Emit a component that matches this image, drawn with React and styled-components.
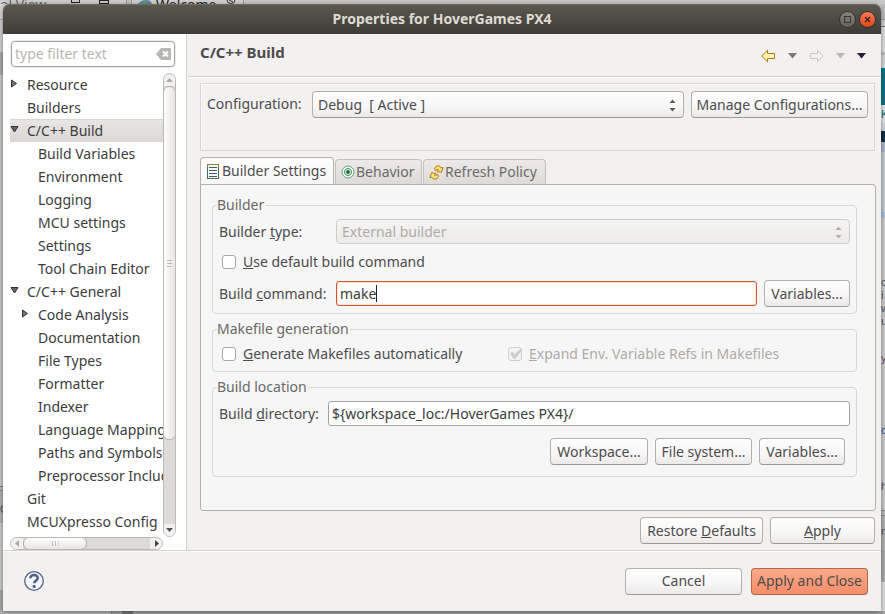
import React, { useState } from "react";
import styled, { createGlobalStyle, css } from "styled-components";

const GlobalStyle = createGlobalStyle`
  * { box-sizing: border-box; }
  body { margin: 0; background: #c9c9c9; }
  body, button, input, select {
    font-family: "Noto Sans", "Open Sans", sans-serif;
    font-size: 14px;
    line-height: 20px;
    color: #4c4c4c;
  }
`;

/* ---------- workspace behind the dialog ---------- */

const Screen = styled.div`
  display: grid;
  min-height: 100vh;
  overflow: hidden;
  & > * { grid-area: 1 / 1; }
`;

const Workspace = styled.div`
  display: grid;
  grid-template-rows: 4px 1fr 3px;
  background: #c9c9c9;
`;

const TopStrip = styled.div`
  display: flex;
  align-items: flex-start;
  overflow: hidden;
  height: 4px;
  background: linear-gradient(90deg, #cdcdcd 0 126px, #999 126px 127px, #c4c4c4 127px 131px, #999 131px 132px, #d0d0d0 132px 243px, #999 243px 244px, #c8c8c8 244px);
`;

const StripText = styled.span`
  flex: none;
  width: ${(p) => p.$width}px;
  line-height: 9px;
  color: ${(p) => p.$color};
  white-space: nowrap;
`;

const StripIcon = styled.svg`
  flex: none;
  width: ${(p) => p.$width}px;
  height: 4px;
`;

const Sides = styled.div`
  display: flex;
  justify-content: space-between;
`;

const Side = styled.div`
  display: flex;
  flex-direction: column;
  width: 4px;
  overflow: hidden;
  background: ${(p) => p.$background};
`;

const SideText = styled.span`
  display: flex;
  flex: none;
  align-items: flex-end;
  height: ${(p) => p.$height}px;
  font-family: "Liberation Sans", sans-serif;
  font-size: 11px;
  line-height: 13px;
  color: ${(p) => p.$color || "#555563"};
`;

const BottomStrip = styled.div`
  background: linear-gradient(90deg, #b5b5b5 0 111px, #888 111px 112px, #a2a2a2 112px 122px, #777 122px 133px, #a2a2a2 133px);
`;

/* ---------- dialog frame ---------- */

const Dialog = styled.main`
  display: flex;
  flex-direction: column;
  margin: 4px 4px 3px 3px;
  border-radius: 7px 7px 0 0;
  background: #f2f1f0;
  box-shadow: 0 1px 5px rgba(0, 0, 0, 0.45);
  min-width: 0;
`;

const TitleBar = styled.header`
  display: grid;
  grid-template-columns: 1fr auto 1fr;
  align-items: center;
  height: 30px;
  padding: 0 5px;
  border-radius: 7px 7px 0 0;
  background: linear-gradient(#5b594f, #3d3c37);
  box-shadow: inset 0 1px #6d6a60;
`;

const WindowTitle = styled.h1`
  grid-column: 2;
  margin: 0;
  font-size: 14px;
  line-height: 20px;
  font-weight: 700;
  color: #dfdbd2;
`;

const WindowButtons = styled.div`
  display: flex;
  justify-content: flex-end;
  gap: 3px;
`;

const WindowButton = styled.button`
  display: flex;
  width: 17px;
  height: 17px;
  padding: 0;
  border: 1px solid #31302c;
  border-radius: 50%;
  background: ${(p) => (p.$close ? "linear-gradient(#f47a55, #e0481a)" : "linear-gradient(#85837b, #65635b)")};
`;

const Body = styled.div`
  display: flex;
  flex: 1;
  border-bottom: 1px solid #d5d3d0;
`;

/* ---------- sidebar ---------- */

const Sidebar = styled.nav`
  display: flex;
  flex: none;
  flex-direction: column;
  width: 184px;
  padding: 7px 10px 0 7px;
  border-right: 1px solid #d5d3d0;
  background: #fff;
`;

const Filter = styled.div`
  display: flex;
  align-items: center;
  height: 26px;
  margin: 0 1px;
  padding: 0 3px;
  border: 1px solid #a6a39c;
  border-radius: 4px;
  background: #fff;
  box-shadow: 0 0 0 1px #eeedec;
`;

const FilterInput = styled.input`
  flex: 1;
  min-width: 0;
  padding: 0;
  border: 0;
  outline: 0;
  background: none;
  &::placeholder { color: #b9b6b0; opacity: 1; }
`;

const PlainButton = styled.button`
  display: flex;
  flex: none;
  padding: 0;
  border: 0;
  background: none;
`;

const TreeArea = styled.div`
  display: grid;
  flex: 1;
  grid-template-columns: minmax(0, 1fr) 13px;
  grid-template-rows: 464px 13px;
  margin-top: 6px;
`;

const Tree = styled.ul`
  margin: 0;
  padding: 0;
  overflow: hidden;
  list-style: none;
`;

const TreeRow = styled.button`
  display: flex;
  align-items: center;
  width: 100%;
  height: 23px;
  padding: 0 0 0 ${(p) => p.$depth * 11}px;
  border: 0;
  background: ${(p) => (p.$selected ? "linear-gradient(#e9e7e6, #d9d6d3)" : "none")};
  box-shadow: ${(p) => (p.$selected ? "inset 0 1px #d8d5d2" : "none")};
  color: #3c3c3c;
  white-space: nowrap;
`;

const Twisty = styled.svg`
  flex: none;
  width: 9px;
  height: 9px;
  margin: 0 8px 2px 0;
`;

const ScrollTrack = styled.div`
  display: flex;
  flex-direction: ${(p) => (p.$vertical ? "column" : "row")};
  border: 1px solid #bdbab5;
  border-radius: 7px;
  background: #dddbd8;
  overflow: hidden;
`;

const ScrollArrow = styled.button`
  display: flex;
  flex: none;
  align-items: center;
  justify-content: center;
  width: ${(p) => (p.$vertical ? 11 : 12)}px;
  height: ${(p) => (p.$vertical ? 12 : 11)}px;
  padding: 0;
  border: 0;
  background: #f2f1f0;
`;

const ScrollThumb = styled.div`
  display: flex;
  flex: none;
  align-items: center;
  justify-content: center;
  border: 1px solid #b2afa9;
  border-radius: 6px;
  ${(p) =>
    p.$vertical
      ? css`height: 354px; margin: 0 -1px; background: linear-gradient(90deg, #fdfdfd, #e7e5e3);`
      : css`width: 64px; margin: -1px 0; background: linear-gradient(#fdfdfd, #e7e5e3);`}
`;

const Grip = styled.span`
  width: 7px;
  height: 7px;
  transform: ${(p) => (p.$vertical ? "rotate(90deg)" : "none")};
  background: repeating-linear-gradient(90deg, #bbb 0 1px, transparent 1px 3px);
  clip-path: inset(1px 0);
`;

const ScrollSpace = styled.div`
  flex: 1;
`;

/* ---------- content ---------- */

const Content = styled.section`
  display: flex;
  flex: 1;
  flex-direction: column;
  min-width: 0;
  margin-left: 1px;
`;

const PageHeader = styled.div`
  display: flex;
  align-items: center;
  justify-content: space-between;
  height: 43px;
  padding: 0 15px 6px 12px;
  border-bottom: 1px solid #d5d3d0;
  box-shadow: 0 1px #fbfbfb;
`;

const PageTitle = styled.h2`
  margin: 0;
  font-size: 15px;
  line-height: 20px;
  font-weight: 700;
`;

const HistoryTools = styled.div`
  display: flex;
  align-items: center;
  gap: 12px;
  padding-top: 8px;
`;

const HistoryPair = styled.div`
  display: flex;
  align-items: center;
  gap: 12px;
`;

const PageBody = styled.div`
  display: flex;
  flex: 1;
  flex-direction: column;
  padding: 6px 6px 6px 12px;
`;

const ConfigurationBar = styled.div`
  display: flex;
  gap: 7px;
  height: 68px;
  padding: 7px 6px;
  border: 1px solid #d8d6d3;
  box-shadow: inset 1px 1px #fbfbfb;
`;

const FieldLabel = styled.label`
  flex: none;
  width: ${(p) => p.$width}px;
  white-space: nowrap;
`;

const ConfigLabel = styled(FieldLabel)`
  padding-top: 3px;
`;

const Button = styled.button`
  flex: none;
  min-width: ${(p) => p.$width || 86}px;
  height: 27px;
  padding: 0 4px;
  border: 1px solid ${(p) => (p.$primary ? "#b5694c" : "#b4b1ac")};
  border-bottom-color: ${(p) => (p.$primary ? "#a86148" : "#9d9a95")};
  border-radius: 4px;
  background: ${(p) =>
    p.$primary ? "linear-gradient(#fcaa8b, #f58d69)" : "linear-gradient(#fefefe, #f7f6f6 60%, #ebeae8)"};
  white-space: nowrap;
`;

const SelectBox = styled.div`
  display: grid;
  flex: 1;
  min-width: 0;
  height: ${(p) => (p.$low ? 25 : 27)}px;
  & > * { grid-area: 1 / 1; }
`;

const Select = styled.select`
  width: 100%;
  padding: 0 20px 0 5px;
  appearance: none;
  border: 1px solid #b4b1ac;
  border-bottom-color: #9d9a95;
  border-radius: 4px;
  background: linear-gradient(#fefefe, #f7f6f6 60%, #ebeae8);
  &:disabled {
    border-color: #cfccc8;
    background: linear-gradient(#f5f4f4, #ecebe9);
    color: #aeaba6;
    opacity: 1;
  }
`;

const SelectArrows = styled.svg`
  width: 7px;
  height: 13px;
  align-self: center;
  justify-self: end;
  margin: 1px 8px 0 0;
  pointer-events: none;
`;

const TabList = styled.div`
  display: flex;
  align-items: flex-end;
  gap: 1px;
  height: 28px;
  margin: 6px 0 -1px;
`;

const Tab = styled.button`
  display: flex;
  align-items: center;
  gap: ${(p) => (p.$active ? 3 : 1)}px;
  width: ${(p) => p.$width}px;
  height: ${(p) => (p.$active ? 28 : 26)}px;
  padding: 0 0 0 ${(p) => (p.$active ? 6 : 5)}px;
  border: 1px solid ${(p) => (p.$active ? "#b4b1ac" : "#c4c1bc")};
  border-bottom-color: ${(p) => (p.$active ? "#f6f6f6" : "#b4b1ac")};
  border-radius: 4px 4px 0 0;
  background: ${(p) => (p.$active ? "linear-gradient(#fefefe, #f6f6f6)" : "linear-gradient(#eceae9, #dddad7)")};
  color: ${(p) => (p.$active ? "#4c4c4c" : "#6c6b69")};
  white-space: nowrap;
  & > svg { flex: none; }
`;

const TabPanel = styled.div`
  display: flex;
  flex: 1;
  flex-direction: column;
  gap: 5px;
  margin-right: -1px;
  padding: 10px 18px 33px 11px;
  border: 1px solid #b4b1ac;
  border-radius: 0 3px 3px 3px;
  background: #f6f6f6;
`;

const Group = styled.fieldset`
  min-width: 0;
  margin: 0;
  padding: 4px 6px 6px;
  border: 1px solid #d9d7d5;
  border-radius: 4px;
`;

const Legend = styled.legend`
  height: 20px;
  margin-left: -2px;
  padding: 0 1px 0 0;
  color: #6a6967;
`;

const GroupRows = styled.div`
  display: flex;
  flex-direction: column;
  gap: 7px;
`;

const FieldRow = styled.div`
  display: flex;
  align-items: center;
`;

const CheckRow = styled.div`
  display: flex;
  height: 22px;
`;

const CheckLabel = styled.label`
  display: flex;
  align-items: center;
  gap: 7px;
  width: ${(p) => (p.$first ? "286px" : "auto")};
  padding-left: 3px;
  color: ${(p) => (p.$disabled ? "#aeaba6" : "#4c4c4c")};
  white-space: nowrap;
`;

const CheckInput = styled.input`
  display: grid;
  flex: none;
  width: 14px;
  height: 14px;
  margin: 0;
  appearance: none;
  border: 1px solid #aaa7a2;
  border-radius: 3px;
  background: #fff;
  &:disabled { border-color: #d0cecb; background: #f5f4f4; }
  &:checked::before {
    content: "";
    width: 12px;
    height: 10px;
    margin: 1px 0 0 1px;
    background: #cfcdca;
    clip-path: polygon(0 45%, 20% 25%, 40% 50%, 85% 0, 100% 12%, 45% 100%, 30% 100%);
  }
`;

const TextField = styled.input`
  flex: 1;
  min-width: 0;
  height: 25px;
  padding: 0 3px;
  border: 1px solid #a6a39c;
  border-radius: 3px;
  outline: 0;
  background: #fff;
  color: #3c3c3c;
`;

const FocusedField = styled.div`
  display: flex;
  flex: 1;
  align-items: center;
  height: 25px;
  margin-right: 7px;
  padding: 0 3px;
  border: 1px solid #d2572e;
  border-radius: 3px;
  background: #fff;
  box-shadow: inset 0 0 0 1px #fbe3da;
`;

const GrowingInput = styled.input`
  field-sizing: content;
  min-width: 1px;
  padding: 0;
  border: 0;
  outline: 0;
  background: none;
  color: #3c3c3c;
  caret-color: transparent;
`;

const Caret = styled.span`
  width: 1px;
  height: 17px;
  background: #222;
`;

const ButtonRow = styled.div`
  display: flex;
  justify-content: flex-end;
  gap: 7px;
  padding: ${(p) => (p.$inset ? "5px" : "6px 0 0")};
`;

const Footer = styled.footer`
  display: flex;
  align-items: center;
  gap: 9px;
  height: 60px;
  padding: 0 13px 0 20px;
  box-shadow: inset 0 1px #fbfbfb;
`;

const HelpButton = styled(PlainButton)`
  margin-right: auto;
`;

/* ---------- drawings ---------- */

const Triangle = ({ dir, color = "#8b8986" }) => {
  const points = { up: "0,5 7,5 3.5,1", down: "0,1 7,1 3.5,5", left: "5,0 5,7 1,3.5", right: "2,0 2,7 6,3.5" };
  return (
    <svg width="7" height="7" aria-hidden="true">
      <polygon points={points[dir]} fill={color} />
    </svg>
  );
};

const Arrows = ({ faded }) => (
  <SelectArrows viewBox="0 0 7 13" aria-hidden="true">
    <path d="M3.500 .5 6.500 4H.5zM.5 9h6l-3 3.500z" fill={faded ? "#b3b0ac" : "#5c5b59"} />
  </SelectArrows>
);

const HistoryArrow = ({ forward }) => (
  <svg width="15" height="14" viewBox="0 0 15 14" aria-hidden="true">
    <g transform={forward ? "translate(15 0) scale(-1 1)" : undefined}>
      <path
        d="M.8 7 6.500 1.200V4.500H13.500V9.500H6.500V12.800z"
        fill={forward ? "#f3f2f1" : "#fff2b4"}
        stroke={forward ? "#cbc9c6" : "#b17a12"}
        strokeLinejoin="round"
      />
    </g>
  </svg>
);

const MenuArrow = ({ color }) => (
  <svg width="9" height="6" viewBox="0 0 9 6" aria-hidden="true">
    <path d="M0 0h9L4.500 5.500z" fill={color} />
  </svg>
);

const SettingsIcon = () => (
  <svg width="12" height="15" viewBox="0 0 12 15" aria-hidden="true">
    <rect x=".5" y=".5" width="11" height="14" fill="#f4faf7" stroke="#9a7b2c" />
    <path d="M.5 3v11.500h11V3" fill="none" stroke="#49695f" />
    <path d="M2 3.500h8M2 6.500h8M2 9.500h8M2 12.500h8" stroke="#3f5a58" />
  </svg>
);

const TargetIcon = () => (
  <svg width="14" height="14" viewBox="0 0 14 14" aria-hidden="true">
    <circle cx="7" cy="7" r="6" fill="#fff" stroke="#55a57c" />
    <circle cx="7" cy="7" r="3.500" fill="#e8f7ea" stroke="#2f8a5a" />
    <circle cx="7" cy="7" r="1.900" fill="#276b2c" />
  </svg>
);

const RefreshIcon = () => (
  <svg width="15" height="15" viewBox="0 0 15 15" aria-hidden="true">
    <g fill="#ffdf78" stroke="#b27a17" strokeLinejoin="round">
      <path d="M5.500 3.500 7.500 1 10.500 1 12 2.700 14 2.500 12.500 7.300 8 6.500 9.500 5 8.500 4 6.500 6z" />
      <path d="M9.500 11.500 7.500 14 4.500 14 3 12.300 1 12.500 2.500 7.700 7 8.500 5.500 10 6.500 11 8.500 9z" />
    </g>
  </svg>
);

const ClearIcon = () => (
  <svg width="15" height="12" viewBox="0 0 15 12" aria-hidden="true">
    <path d="M5 0h9q1 0 1 1v10q0 1-1 1H5L0 6z" fill="#b9b7b3" />
    <path d="m7 3.500 5 5m0-5-5 5" stroke="#fff" strokeWidth="2" />
  </svg>
);

const HelpIcon = () => (
  <svg width="22" height="22" viewBox="0 0 22 22" aria-hidden="true">
    <circle cx="11" cy="11" r="9.300" fill="#f3f5f9" stroke="#50648a" strokeWidth="1.300" />
    <path d="M7.300 8.300C7.300 3.800 14.800 4 14.700 8.200 14.600 10.600 11.200 10.700 11.200 13.200" fill="none" stroke="#50648a" strokeWidth="2.600" />
    <circle cx="11.100" cy="16.400" r="1.600" fill="#50648a" />
  </svg>
);

/* ---------- page ---------- */

const treeItems = [
  { name: "Resource", state: "closed" },
  { name: "Builders" },
  { name: "C/C++ Build", state: "open" },
  { name: "Build Variables", depth: 1 },
  { name: "Environment", depth: 1 },
  { name: "Logging", depth: 1 },
  { name: "MCU settings", depth: 1 },
  { name: "Settings", depth: 1 },
  { name: "Tool Chain Editor", depth: 1 },
  { name: "C/C++ General", state: "open" },
  { name: "Code Analysis", depth: 1, state: "closed" },
  { name: "Documentation", depth: 1 },
  { name: "File Types", depth: 1 },
  { name: "Formatter", depth: 1 },
  { name: "Indexer", depth: 1 },
  { name: "Language Mappings", depth: 1 },
  { name: "Paths and Symbols", depth: 1 },
  { name: "Preprocessor Include", depth: 1 },
  { name: "Git" },
  { name: "MCUXpresso Config" },
];

const TreeItem = ({ item, selected, onSelect }) => (
  <li>
    <TreeRow type="button" $depth={item.depth || 0} $selected={selected} onClick={onSelect}>
      <Twisty viewBox="0 0 9 9" aria-hidden="true">
        {item.state === "closed" && <path d="M1.500 1v7L6.500 4.500z" fill="#777" stroke="#333" />}
        {item.state === "open" && <path d="M1 1.500h7L4.500 7z" fill="#666" stroke="#333" />}
      </Twisty>
      {item.name}
    </TreeRow>
  </li>
);

const Backdrop = () => (
  <Workspace aria-hidden="true">
    <TopStrip>
      <StripText $width={71} $color="#666">ol View</StripText>
      <StripIcon $width={67} viewBox="0 0 67 4">
        <path d="M0 2.500h9M.5 0v3M8.500 0v3M28 .5h10M28 3.500h10M28.500 0v4M37.500 0v4" stroke="#222" fill="none" />
      </StripIcon>
      <StripIcon $width={18} viewBox="0 0 18 4">
        <path d="M0 4Q3 0 8 0t6 4z" fill="#5b8ba0" />
        <path d="M5 4 7 1l2 3z" fill="#6d9e57" />
      </StripIcon>
      <StripText $width={70} $color="#222">Welcome</StripText>
      <StripIcon $width={12} viewBox="0 0 12 4">
        <path d="M1 0q0 3.500 4 3.500T9 0M3 0l4 2" stroke="#333" fill="none" />
      </StripIcon>
    </TopStrip>
    <Sides>
      <Side $background="linear-gradient(#d5d5d5 0 15px, #aaa 15px 16px, #cfcfcf 16px 48px, #a9a9a9 48px 71px, #c7c7c7 71px 482px, #777 482px 483px, #bbb 483px 486px, #888 486px 487px, #b2b2b2 487px 519px, #ccc 519px 586px, #aaa 586px)">
        <SideText $height={512}>C</SideText>
      </Side>
      <Side $background="linear-gradient(#bbb 0 15px, #999 15px 16px, #ccc 16px 22px, #777 22px 23px, #ddd 23px 48px, #bbb 48px 51px, #d5d5d5 51px 64px, #087384 64px 101px, #dfe5e8 101px 119px, #d2d7da 119px 127px, #152c40 127px 138px, #a9b3c2 138px 148px, #c3c9cf 148px 208px, #a7bdd9 208px 214px, #cbcbcb 214px 506px, #888 506px 507px, #bbb 507px 511px, #888 511px 512px, #b0b0b0 512px 547px, #999 547px 548px, #aaa 548px 578px, #ddd 578px)">
        <SideText $height={117} $color="#087384">K</SideText>
        <SideText $height={168}>o</SideText>
        <SideText $height={13}>i</SideText>
        <SideText $height={13}>w</SideText>
        <SideText $height={13}>u</SideText>
        <SideText $height={37}>y</SideText>
        <SideText $height={72} $color="#245a95">d</SideText>
        <SideText $height={56}>h</SideText>
        <SideText $height={45}>n</SideText>
      </Side>
    </Sides>
    <BottomStrip />
  </Workspace>
);

export default function App() {
  const [selected, setSelected] = useState("C/C++ Build");
  const [command, setCommand] = useState("make");
  return (
    <>
      <GlobalStyle />
      <Screen>
        <Backdrop />
        <Dialog>
          <TitleBar>
            <WindowTitle>Properties for HoverGames PX4</WindowTitle>
            <WindowButtons>
              <WindowButton type="button" aria-label="Maximize">
                <svg width="15" height="15"><rect x="4.500" y="4.500" width="6" height="6" fill="none" stroke="#35342f" /></svg>
              </WindowButton>
              <WindowButton type="button" aria-label="Close" $close>
                <svg width="15" height="15"><path d="m5 5 5 5m0-5-5 5" stroke="#43190b" strokeWidth="1.300" /></svg>
              </WindowButton>
            </WindowButtons>
          </TitleBar>
          <Body>
            <Sidebar aria-label="Property pages">
              <Filter>
                <FilterInput type="text" placeholder="type filter text" aria-label="Filter" />
                <PlainButton type="button" aria-label="Clear filter"><ClearIcon /></PlainButton>
              </Filter>
              <TreeArea>
                <Tree>
                  {treeItems.map((item) => (
                    <TreeItem
                      key={item.name}
                      item={item}
                      selected={item.name === selected}
                      onSelect={() => setSelected(item.name)}
                    />
                  ))}
                </Tree>
                <ScrollTrack $vertical>
                  <ScrollArrow type="button" $vertical aria-label="Scroll up"><Triangle dir="up" color="#aaa" /></ScrollArrow>
                  <ScrollThumb $vertical><Grip $vertical /></ScrollThumb>
                  <ScrollSpace />
                  <ScrollArrow type="button" $vertical aria-label="Scroll down"><Triangle dir="down" color="#555" /></ScrollArrow>
                </ScrollTrack>
                <ScrollTrack>
                  <ScrollArrow type="button" aria-label="Scroll left"><Triangle dir="left" color="#aaa" /></ScrollArrow>
                  <ScrollThumb><Grip /></ScrollThumb>
                  <ScrollSpace />
                  <ScrollArrow type="button" aria-label="Scroll right"><Triangle dir="right" color="#444" /></ScrollArrow>
                </ScrollTrack>
              </TreeArea>
            </Sidebar>
            <Content>
              <PageHeader>
                <PageTitle>C/C++ Build</PageTitle>
                <HistoryTools>
                  <HistoryPair>
                    <PlainButton type="button" aria-label="Back"><HistoryArrow /></PlainButton>
                    <PlainButton type="button" aria-label="Back history"><MenuArrow color="#777" /></PlainButton>
                  </HistoryPair>
                  <HistoryPair>
                    <PlainButton type="button" aria-label="Forward"><HistoryArrow forward /></PlainButton>
                    <PlainButton type="button" aria-label="Forward history"><MenuArrow color="#b9b7b4" /></PlainButton>
                  </HistoryPair>
                  <PlainButton type="button" aria-label="Menu"><MenuArrow color="#2d1740" /></PlainButton>
                </HistoryTools>
              </PageHeader>
              <PageBody>
                <ConfigurationBar>
                  <ConfigLabel htmlFor="configuration" $width={98}>Configuration:</ConfigLabel>
                  <SelectBox>
                    <Select id="configuration"><option>Debug&nbsp; [ Active ]</option></Select>
                    <Arrows />
                  </SelectBox>
                  <Button type="button" $width={177}>Manage Configurations...</Button>
                </ConfigurationBar>
                <TabList role="tablist">
                  <Tab type="button" role="tab" aria-selected="true" $active $width={134}><SettingsIcon />Builder Settings</Tab>
                  <Tab type="button" role="tab" $width={87}><TargetIcon />Behavior</Tab>
                  <Tab type="button" role="tab" $width={123}><RefreshIcon />Refresh Policy</Tab>
                </TabList>
                <TabPanel role="tabpanel">
                  <Group>
                    <Legend>Builder</Legend>
                    <GroupRows>
                      <FieldRow>
                        <FieldLabel htmlFor="builder-type" $width={117}>Builder <u>t</u>ype:</FieldLabel>
                        <SelectBox $low>
                          <Select id="builder-type" disabled><option>External builder</option></Select>
                          <Arrows faded />
                        </SelectBox>
                      </FieldRow>
                      <CheckRow>
                        <CheckLabel><CheckInput type="checkbox" /><span><u>U</u>se default build command</span></CheckLabel>
                      </CheckRow>
                      <FieldRow>
                        <FieldLabel htmlFor="build-command" $width={117}>Build <u>c</u>ommand:</FieldLabel>
                        <FocusedField>
                          <GrowingInput id="build-command" type="text" value={command} onChange={(e) => setCommand(e.target.value)} />
                          <Caret />
                        </FocusedField>
                        <Button type="button">Variables...</Button>
                      </FieldRow>
                    </GroupRows>
                  </Group>
                  <Group>
                    <Legend>Makefile generation</Legend>
                    <CheckRow>
                      <CheckLabel $first><CheckInput type="checkbox" /><span><u>G</u>enerate Makefiles automatically</span></CheckLabel>
                      <CheckLabel $disabled><CheckInput type="checkbox" defaultChecked disabled /><span><u>E</u>xpand Env. Variable Refs in Makefiles</span></CheckLabel>
                    </CheckRow>
                  </Group>
                  <Group>
                    <Legend>Build location</Legend>
                    <GroupRows>
                      <FieldRow>
                        <FieldLabel htmlFor="build-directory" $width={109}>Build <u>d</u>irectory:</FieldLabel>
                        <TextField id="build-directory" type="text" defaultValue="${workspace_loc:/HoverGames PX4}/" />
                      </FieldRow>
                      <ButtonRow $inset>
                        <Button type="button" $width={98}>Workspace...</Button>
                        <Button type="button" $width={97}>File system...</Button>
                        <Button type="button">Variables...</Button>
                      </ButtonRow>
                    </GroupRows>
                  </Group>
                </TabPanel>
                <ButtonRow>
                  <Button type="button" $width={123}>Restore <u>D</u>efaults</Button>
                  <Button type="button" $width={105}><u>A</u>pply</Button>
                </ButtonRow>
              </PageBody>
            </Content>
          </Body>
          <Footer>
            <HelpButton type="button" aria-label="Help"><HelpIcon /></HelpButton>
            <Button type="button" $width={117}>Cancel</Button>
            <Button type="button" $width={117} $primary>Apply and Close</Button>
          </Footer>
        </Dialog>
      </Screen>
    </>
  );
}
